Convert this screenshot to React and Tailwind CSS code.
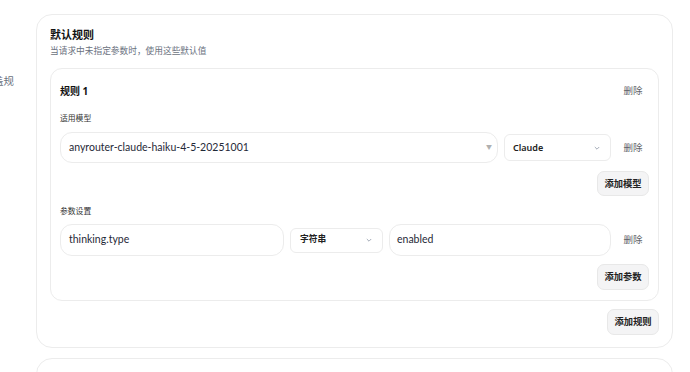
import React from "react";

const font = { fontFamily: '"Noto Sans", "Noto Sans CJK SC", sans-serif' };
const latin = { fontFamily: 'Lato, "Noto Sans", "Noto Sans CJK SC", sans-serif' };

function Chevron() {
  return (
    <svg width="8" height="8" viewBox="0 0 8 8" className="text-gray-400">
      <path d="M1.8 3 L4 5.2 L6.2 3" fill="none" stroke="currentColor" strokeWidth="0.9" />
    </svg>
  );
}

function Del() {
  return (
    <button className="w-[32px] shrink-0 text-center text-[9.5px] leading-[14px] text-[#5f6368]">删除</button>
  );
}

function AddBtn({ children, h }) {
  return (
    <button
      className={
        (h === 25 ? "h-[25px] " : "h-[26px] ") +
        "w-[52px] rounded-[7px] border border-[#e8e8e8] bg-[#f4f4f5] text-[9.3px] font-semibold text-[#222] flex items-center justify-center"
      }
    >
      {children}
    </button>
  );
}

export default function App() {
  return (
    <div className="w-[690px] h-[372px] overflow-hidden bg-white flex text-[#1f2937]" style={font}>
      <div className="w-[36px] shrink-0 pt-[73px]">
        <div className="w-[14px] overflow-hidden flex justify-end">
          <span className="whitespace-nowrap text-[10.5px] text-[#6b7280] leading-[16px]">覆盖规</span>
        </div>
      </div>
      <div className="w-[637px] shrink-0 pt-[14px] flex flex-col gap-[10px]">
        <div className="rounded-[16px] border border-[#ececec] px-[13px] pt-[11px] pb-[12px] flex flex-col">
          <div className="h-[18px] flex items-center text-[11px] font-bold text-[#111]">默认规则</div>
          <div className="h-[16px] flex items-center text-[8.7px] text-[#6b7280]">当请求中未指定参数时，使用这些默认值</div>
          <div className="mt-[8px] rounded-[12px] border border-[#ececec] px-[9px] pt-[11px] pb-[10px] flex flex-col">
            <div className="h-[22px] flex items-center justify-between">
              <span className="text-[10px] font-bold text-[#111]">规则 1</span>
              <Del />
            </div>
            <div className="mt-[9px] h-[16px] flex items-center text-[7.8px] text-[#333]">适用模型</div>
            <div className="mt-[5px] h-[31px] flex items-center gap-[6px]">
              <div className="flex-1 h-[31px] rounded-[12px] border border-[#ececec] pl-[8px] pr-[5px] flex items-center justify-between">
                <span className="text-[10.5px] text-[#1f2937]" style={latin}>anyrouter-claude-haiku-4-5-20251001</span>
                <span className="text-[6px] text-[#b0b0b0]">▼</span>
              </div>
              <div className="w-[107px] h-[27px] rounded-[6px] border border-[#ececec] pl-[8px] pr-[9px] flex items-center justify-between">
                <span className="text-[9px] font-semibold text-[#222]">Claude</span>
                <Chevron />
              </div>
              <Del />
            </div>
            <div className="mt-[8px] flex justify-end">
              <AddBtn h={25}>添加模型</AddBtn>
            </div>
            <div className="mt-[8px] h-[16px] flex items-center text-[7.8px] text-[#333]">参数设置</div>
            <div className="mt-[4px] h-[32px] flex items-center gap-[6px]">
              <div className="flex-1 h-[32px] rounded-[12px] border border-[#ececec] px-[8px] flex items-center">
                <span className="text-[10.5px] text-[#1f2937]" style={latin}>thinking.type</span>
              </div>
              <div className="w-[93px] h-[25px] rounded-[6px] border border-[#ececec] pl-[9px] pr-[9px] flex items-center justify-between">
                <span className="text-[8.7px] font-semibold text-[#222]">字符串</span>
                <Chevron />
              </div>
              <div className="flex-1 h-[32px] rounded-[12px] border border-[#ececec] px-[7px] flex items-center">
                <span className="text-[10.5px] text-[#1f2937]" style={latin}>enabled</span>
              </div>
              <Del />
            </div>
            <div className="mt-[8px] flex justify-end">
              <AddBtn>添加参数</AddBtn>
            </div>
          </div>
          <div className="mt-[8px] flex justify-end">
            <AddBtn>添加规则</AddBtn>
          </div>
        </div>
        <div className="rounded-[16px] border border-[#ececec] px-[13px] pt-[12px] h-[60px]">
          <div className="text-[11px] font-bold leading-[18px] text-[#d0d0d0]">模型覆盖规则</div>
        </div>
      </div>
    </div>
  );
}
